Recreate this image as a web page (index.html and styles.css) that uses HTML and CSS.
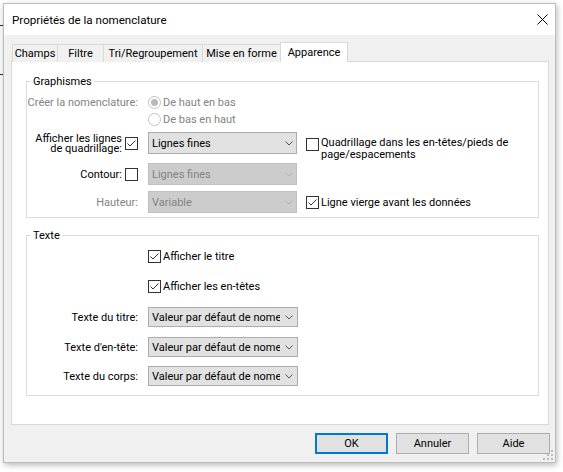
FILE: index.html
```html
<!DOCTYPE html>
<html lang="fr">
<head>
<meta charset="utf-8">
<title>Propriétés de la nomenclature</title>
<link rel="stylesheet" href="styles.css">
</head>
<body>
<div class="dialog">
  <div class="titlebar">
    <span class="title">Propriétés de la nomenclature</span>
    <svg class="close" width="11" height="11" viewBox="0 0 11 11"><path d="M0.5 0.5L10.5 10.5M10.5 0.5L0.5 10.5" stroke="#000" stroke-width="1" fill="none"/></svg>
  </div>

  <div class="tabs">
    <div class="tab w-champs">Champs</div>
    <div class="tab w-filtre">Filtre</div>
    <div class="tab w-tri">Tri/Regroupement</div>
    <div class="tab w-mise">Mise en forme</div>
    <div class="tab active w-app">Apparence</div>
  </div>

  <div class="panel">
    <div class="group g1">
      <div class="group-title">Graphismes</div>

      <div class="row h17 mt4">
        <div class="lab dis">Créer la nomenclature:</div>
        <div class="opt dis">
          <svg class="radio" width="13" height="13" viewBox="0 0 13 13"><circle cx="6.5" cy="6.5" r="6" fill="#fff" stroke="#c2c2c2"/><circle cx="6.5" cy="6.5" r="3.5" fill="#b9b9b9"/></svg>
          <span>De haut en bas</span>
        </div>
      </div>

      <div class="row h17">
        <div class="lab"></div>
        <div class="opt dis">
          <svg class="radio" width="13" height="13" viewBox="0 0 13 13"><circle cx="6.5" cy="6.5" r="6" fill="#fff" stroke="#c2c2c2"/></svg>
          <span>De bas en haut</span>
        </div>
      </div>

      <div class="row h22 mt4">
        <div class="lab">
          <span class="two-lines">Afficher les lignes<br>de quadrillage:</span>
          <svg class="cb" width="13" height="13" viewBox="0 0 13 13"><rect x="0.5" y="0.5" width="12" height="12" fill="#fff" stroke="#333"/><path d="M2.5 6.5L5 9L10.5 3.5" fill="none" stroke="#333"/></svg>
        </div>
        <div class="select">
          <span class="val">Lignes fines</span>
          <svg class="chev" width="8" height="5" viewBox="0 0 8 5"><path d="M0.5 0.5L4 4L7.5 0.5" fill="none" stroke="#555"/></svg>
        </div>
        <div class="side top">
          <svg class="cb" width="13" height="13" viewBox="0 0 13 13"><rect x="0.5" y="0.5" width="12" height="12" fill="#fff" stroke="#333"/></svg>
          <span class="side-text">Quadrillage dans les en-têtes/pieds de<br>page/espacements</span>
        </div>
      </div>

      <div class="row h22 mt9">
        <div class="lab">
          <span>Contour:</span>
          <svg class="cb" width="13" height="13" viewBox="0 0 13 13"><rect x="0.5" y="0.5" width="12" height="12" fill="#fff" stroke="#333"/></svg>
        </div>
        <div class="select disabled">
          <span class="val">Lignes fines</span>
          <svg class="chev" width="8" height="5" viewBox="0 0 8 5"><path d="M0.5 0.5L4 4L7.5 0.5" fill="none" stroke="#b3b3b3"/></svg>
        </div>
      </div>

      <div class="row h22 mt6">
        <div class="lab dis">Hauteur:</div>
        <div class="select disabled">
          <span class="val">Variable</span>
          <svg class="chev" width="8" height="5" viewBox="0 0 8 5"><path d="M0.5 0.5L4 4L7.5 0.5" fill="none" stroke="#b3b3b3"/></svg>
        </div>
        <div class="side">
          <svg class="cb" width="13" height="13" viewBox="0 0 13 13"><rect x="0.5" y="0.5" width="12" height="12" fill="#fff" stroke="#333"/><path d="M2.5 6.5L5 9L10.5 3.5" fill="none" stroke="#333"/></svg>
          <span>Ligne vierge avant les données</span>
        </div>
      </div>
    </div>

    <div class="group g2">
      <div class="group-title">Texte</div>

      <div class="row h17 mt4">
        <div class="lab"></div>
        <div class="opt">
          <svg class="cb" width="13" height="13" viewBox="0 0 13 13"><rect x="0.5" y="0.5" width="12" height="12" fill="#fff" stroke="#333"/><path d="M2.5 6.5L5 9L10.5 3.5" fill="none" stroke="#333"/></svg>
          <span>Afficher le titre</span>
        </div>
      </div>

      <div class="row h17 mt13">
        <div class="lab"></div>
        <div class="opt">
          <svg class="cb" width="13" height="13" viewBox="0 0 13 13"><rect x="0.5" y="0.5" width="12" height="12" fill="#fff" stroke="#333"/><path d="M2.5 6.5L5 9L10.5 3.5" fill="none" stroke="#333"/></svg>
          <span>Afficher les en-têtes</span>
        </div>
      </div>

      <div class="row h20 mt12">
        <div class="lab">Texte du titre:</div>
        <div class="select wide">
          <span class="val">Valeur par défaut de nomenclature</span>
          <svg class="chev" width="8" height="5" viewBox="0 0 8 5"><path d="M0.5 0.5L4 4L7.5 0.5" fill="none" stroke="#555"/></svg>
        </div>
      </div>

      <div class="row h20 mt10">
        <div class="lab">Texte d'en-tête:</div>
        <div class="select wide">
          <span class="val">Valeur par défaut de nomenclature</span>
          <svg class="chev" width="8" height="5" viewBox="0 0 8 5"><path d="M0.5 0.5L4 4L7.5 0.5" fill="none" stroke="#555"/></svg>
        </div>
      </div>

      <div class="row h20 mt9">
        <div class="lab">Texte du corps:</div>
        <div class="select wide">
          <span class="val">Valeur par défaut de nomenclature</span>
          <svg class="chev" width="8" height="5" viewBox="0 0 8 5"><path d="M0.5 0.5L4 4L7.5 0.5" fill="none" stroke="#555"/></svg>
        </div>
      </div>
    </div>
  </div>

  <div class="buttons">
    <div class="btn default">OK</div>
    <div class="btn">Annuler</div>
    <div class="btn">Aide</div>
  </div>

  <svg class="grip" width="12" height="12" viewBox="0 0 12 12">
    <rect x="9" y="1" width="2" height="2" fill="#bcbcbc"/>
    <rect x="5" y="5" width="2" height="2" fill="#bcbcbc"/>
    <rect x="9" y="5" width="2" height="2" fill="#bcbcbc"/>
    <rect x="1" y="9" width="2" height="2" fill="#bcbcbc"/>
    <rect x="5" y="9" width="2" height="2" fill="#bcbcbc"/>
    <rect x="9" y="9" width="2" height="2" fill="#bcbcbc"/>
  </svg>
</div>
</body>
</html>
```

FILE: styles.css
```css
* { box-sizing: border-box; }

html, body { margin: 0; }

body {
  width: 563px;
  height: 472px;
  overflow: hidden;
  padding: 3px 0 0 3px;
  font-family: Roboto, "Liberation Sans", sans-serif;
  font-size: 11px;
  color: #000;
  background:
    linear-gradient(#2b2b2b, #2b2b2b) 0 25px / 3px 1px no-repeat,
    linear-gradient(#2b2b2b, #2b2b2b) 0 74px / 3px 1px no-repeat,
    #fff;
}

.dialog {
  position: relative;
  width: 553px;
  height: 460px;
  border: 1px solid #bdbdbd;
  background: #f0f0f0;
  box-shadow: 1px 2px 6px rgba(0, 0, 0, 0.28);
}

.titlebar {
  height: 31px;
  background: #fff;
  display: flex;
  align-items: center;
  justify-content: space-between;
  padding: 0 7px 0 8px;
}

.title { font-size: 11.6px; }

.close { display: block; }

/* tabs */
.tabs {
  display: flex;
  align-items: flex-end;
  height: 20px;
  margin: 7px 0 -1px 8px;
}

.tab {
  height: 18px;
  border: 1px solid #d9d9d9;
  border-bottom: 0;
  margin-right: -1px;
  background: #f0f0f0;
  display: flex;
  align-items: center;
  justify-content: center;
  white-space: nowrap;
}

.tab.active {
  height: 20px;
  background: #fff;
  position: relative;
  z-index: 1;
}

.w-champs { width: 46px; }
.w-filtre { width: 47px; }
.w-tri { width: 100px; }
.w-mise { width: 79px; }
.w-app { width: 68px; }

/* panel */
.panel {
  margin-left: 7px;
  width: 538px;
  height: 364px;
  background: #fff;
  border: 1px solid #d9d9d9;
  padding: 19px 9px 0 14px;
}

.group { border: 1px solid #dcdcdc; }
.g1 { height: 137px; }
.g2 { height: 161px; margin-top: 17px; }

.group-title {
  width: fit-content;
  height: 16px;
  line-height: 16px;
  margin: -8px 0 0 4px;
  padding: 0 2px;
  background: #fff;
}

.row {
  display: flex;
  align-items: center;
}

.h17 { height: 17px; }
.h20 { height: 20px; }
.h22 { height: 22px; }
.mt4 { margin-top: 4px; }
.mt6 { margin-top: 6px; }
.mt9 { margin-top: 9px; }
.mt10 { margin-top: 10px; }
.mt12 { margin-top: 12px; }
.mt13 { margin-top: 13px; }

.lab {
  flex: none;
  width: 112px;
  display: flex;
  justify-content: flex-end;
  align-items: center;
  white-space: nowrap;
  padding-right: 1px;
}

.lab .cb { margin-left: 3px; }

.two-lines {
  text-align: right;
  line-height: 10px;
  padding-top: 1px;
}

.dis { color: #838383; }

.opt {
  margin-left: 9px;
  display: flex;
  align-items: center;
  white-space: nowrap;
}

.opt span { margin-left: 2px; }

svg { display: block; flex: none; }

/* combo boxes */
.select {
  flex: none;
  margin-left: 9px;
  width: 149px;
  height: 100%;
  border: 1px solid #adadad;
  background: #e1e1e1;
  display: flex;
  align-items: center;
  padding: 0 3px 0 3px;
}

.select.wide {
  width: 150px;
  padding-right: 4px;
}

.select .val {
  flex: 1;
  min-width: 0;
  overflow: hidden;
  white-space: nowrap;
}

.select .chev { margin-left: 5px; }

.select.disabled {
  background: #cccccc;
  border-color: #bfbfbf;
  color: #838383;
}

/* right column */
.side {
  margin-left: 9px;
  display: flex;
  align-items: center;
  white-space: nowrap;
}

.side > span { margin-left: 2px; }

.side.top {
  align-self: flex-start;
  align-items: flex-start;
  margin-top: 6px;
  height: 13px;
}

.side-text {
  line-height: 12px;
  margin-top: -1px;
}

/* buttons */
.buttons {
  display: flex;
  justify-content: flex-end;
  gap: 8px;
  margin-top: 8px;
  padding-right: 5px;
}

.btn {
  width: 73px;
  height: 21px;
  border: 1px solid #adadad;
  background: #e1e1e1;
  display: flex;
  align-items: center;
  justify-content: center;
}

.btn.default { border: 2px solid #0078d7; }

.grip {
  position: absolute;
  right: 1px;
  bottom: 1px;
}
```
